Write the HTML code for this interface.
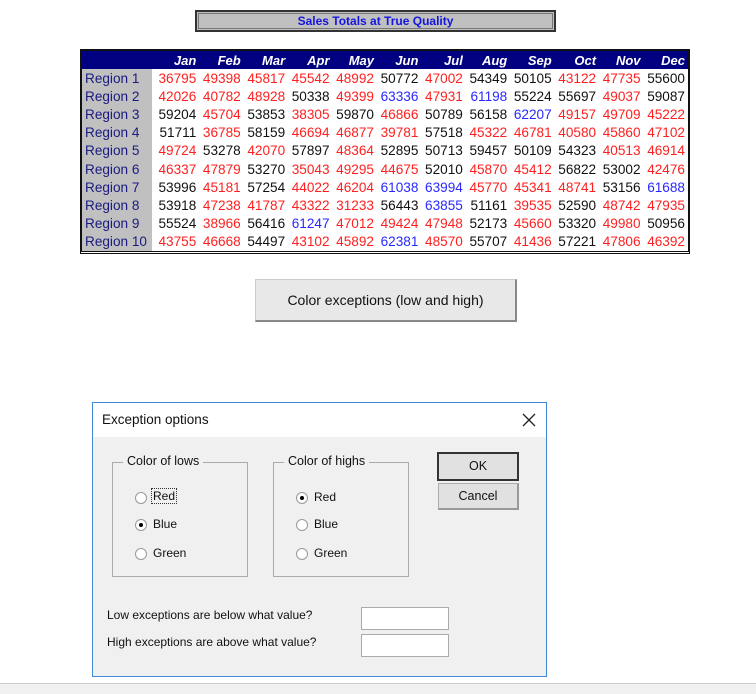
<!DOCTYPE html>
<html><head><style>
body{margin:0;width:756px;height:693px;background:#fff;position:relative;overflow:hidden;font-family:"Liberation Sans",sans-serif}
.a{position:absolute}
#title{left:195px;top:10px;width:357px;height:18px;background:#c0c0c0;border:2px solid #333;outline:1px solid #777;outline-offset:-4px;text-align:center;font:bold 12px/18px "Liberation Sans",sans-serif;color:#1515e0}
#tbl{left:80px;top:49px;width:606px;height:200px;border:2px solid #111;border-bottom:3px double #111}
table{border-collapse:collapse;font-size:13.6px}
td{height:18.2px;padding:0;text-align:right;white-space:nowrap}
td.l{background:#c0c0c0;color:#1a1a80;text-align:left;padding-left:3px;width:67px}
tr.h td{background:#000080;color:#fff;font-weight:bold;font-style:italic;height:18px;padding-right:0;font-size:13px}
td.n{width:44.6px}
.r{color:#ff1f1f}.b{color:#2929ff}.k{color:#111}
#btn{left:255px;top:279px;width:259px;height:40px;background:#e8e8e8;border:1px solid #ccc;border-right:2px solid #888;border-bottom:2px solid #888;text-align:center;font-size:14px;line-height:40px;color:#111}
#dlg{left:92px;top:402px;width:453px;height:273px;border:1px solid #3f8ad6;background:#f0f0f0;font-size:12px;color:#111}
#dt{left:0;top:0;width:453px;height:34px;background:#fff;font-size:13.5px;line-height:34px}
.gb{border:1px solid #aaa;width:134px;height:113px;top:59px}
.gl{background:#f0f0f0;padding:0 4px;top:-9px;left:10px;font-size:12.5px}
.rd{width:10px;height:10px;border:1px solid #999;border-radius:50%;background:#fff;}
.rd.on::after{content:"";position:absolute;left:3px;top:3px;width:4px;height:4px;border-radius:50%;background:#000}
.bt{background:#e1e1e1;border:1px solid #adadad;text-align:center;font-size:12.5px}
.tb{background:#fff;border:1px solid #aaa;width:86px;height:21px}
</style></head><body>
<div id="title" class="a">Sales Totals at True Quality</div>
<div id="tbl" class="a"><table>
<tr class="h"><td class="l" style="background:#000080"></td><td class="n">Jan</td><td class="n">Feb</td><td class="n">Mar</td><td class="n">Apr</td><td class="n">May</td><td class="n">Jun</td><td class="n">Jul</td><td class="n">Aug</td><td class="n">Sep</td><td class="n">Oct</td><td class="n">Nov</td><td class="n" style="padding-right:3px">Dec</td></tr>
<tbody id="tb"></tbody></table></div>
<div id="btn" class="a">Color exceptions (low and high)</div>
<div id="dlg" class="a">
<div id="dt" class="a"><span style="margin-left:9px">Exception options</span>
<svg class="a" style="left:429px;top:10px" width="14" height="14"><path d="M1 1L13 13M13 1L1 13" stroke="#222" stroke-width="1.3"/></svg></div>
<div class="a gb" style="left:19px"><div class="a gl">Color of lows</div>
<div class="a rd" style="left:22px;top:29px"></div><div class="a" style="left:38px;top:25px;border:1px dotted #333;padding:0 1px">Red</div>
<div class="a rd on" style="left:22px;top:56px"></div><div class="a" style="left:40px;top:54px">Blue</div>
<div class="a rd" style="left:22px;top:85px"></div><div class="a" style="left:40px;top:83px">Green</div></div>
<div class="a gb" style="left:180px"><div class="a gl">Color of highs</div>
<div class="a rd on" style="left:22px;top:29px"></div><div class="a" style="left:40px;top:27px">Red</div>
<div class="a rd" style="left:22px;top:56px"></div><div class="a" style="left:40px;top:54px">Blue</div>
<div class="a rd" style="left:22px;top:85px"></div><div class="a" style="left:40px;top:83px">Green</div></div>
<div class="a bt" style="left:344px;top:49px;width:78px;height:25px;line-height:25px;border:2px solid #333">OK</div>
<div class="a bt" style="left:345px;top:80px;width:78px;height:24px;line-height:24px;border-right:2px solid #999;border-bottom:2px solid #999">Cancel</div>
<div class="a" style="left:14px;top:205px">Low exceptions are below what value?</div>
<div class="a" style="left:14px;top:232px">High exceptions are above what value?</div>
<div class="a tb" style="left:268px;top:204px"></div>
<div class="a tb" style="left:268px;top:231px"></div>
</div>
<div class="a" style="left:0;top:683px;width:756px;height:10px;background:#f0f0f0;border-top:1px solid #ccc"></div>
<script>
var d=[[36795,49398,45817,45542,48992,50772,47002,54349,50105,43122,47735,55600],
[42026,40782,48928,50338,49399,63336,47931,61198,55224,55697,49037,59087],
[59204,45704,53853,38305,59870,46866,50789,56158,62207,49157,49709,45222],
[51711,36785,58159,46694,46877,39781,57518,45322,46781,40580,45860,47102],
[49724,53278,42070,57897,48364,52895,50713,59457,50109,54323,40513,46914],
[46337,47879,53270,35043,49295,44675,52010,45870,45412,56822,53002,42476],
[53996,45181,57254,44022,46204,61038,63994,45770,45341,48741,53156,61688],
[53918,47238,41787,43322,31233,56443,63855,51161,39535,52590,48742,47935],
[55524,38966,56416,61247,47012,49424,47948,52173,45660,53320,49980,50956],
[43755,46668,54497,43102,45892,62381,48570,55707,41436,57221,47806,46392]];
var h="";d.forEach(function(r,i){h+='<tr><td class="l">Region '+(i+1)+'</td>';r.forEach(function(v,j){h+='<td class="n '+(v<50000?'r':v>60000?'b':'k')+'"'+(j==11?' style="padding-right:3px"':'')+'>'+v+'</td>';});h+='</tr>';});
document.getElementById('tb').innerHTML=h;
</script>
</body></html>
